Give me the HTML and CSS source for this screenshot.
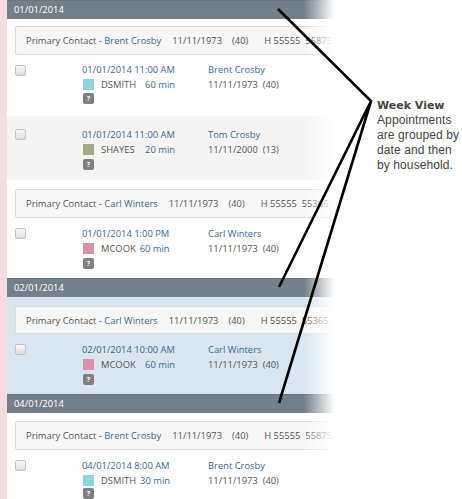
FILE: index.html
```html
<!DOCTYPE html>
<html>
<head>
<meta charset="utf-8"/>
<link rel="stylesheet" href="styles.css">
<title>Week View</title>
</head>

<body>
<div class="Page">
  <div class="Schedule">
    <div class="DateBar">01/01/2014</div>

    <div class="Contact">
      <span class="Label">Primary Contact - <a>Brent Crosby</a></span><span class="Dob">11/11/1973</span><span class="Age">(40)</span><span class="Phone">H 55555&nbsp;&nbsp;55875</span>
    </div>
    <div class="Appt First">
      <span class="Check"></span>
      <div class="When">
        <a>01/01/2014 11:00 AM</a>
        <div class="Who"><span class="Swatch Teal"></span><span class="Staff">DSMITH</span><a class="Len">60 min</a></div>
        <span class="Help">?</span>
      </div>
      <div class="Patient">
        <a>Brent Crosby</a>
        <div class="Birth">11/11/1973&nbsp;&nbsp;(40)</div>
      </div>
    </div>
    <div class="Appt Grey">
      <span class="Check"></span>
      <div class="When">
        <a>01/01/2014 11:00 AM</a>
        <div class="Who"><span class="Swatch Olive"></span><span class="Staff">SHAYES</span><a class="Len">20 min</a></div>
        <span class="Help">?</span>
      </div>
      <div class="Patient">
        <a>Tom Crosby</a>
        <div class="Birth">11/11/2000&nbsp;&nbsp;(13)</div>
      </div>
    </div>

    <div class="Contact">
      <span class="Label">Primary Contact - <a>Carl Winters</a></span><span class="Dob">11/11/1973</span><span class="Age">(40)</span><span class="Phone">H 55555&nbsp;&nbsp;55365</span>
    </div>
    <div class="Appt">
      <span class="Check"></span>
      <div class="When Short">
        <a>01/01/2014 1:00 PM</a>
        <div class="Who"><span class="Swatch Pink"></span><span class="Staff">MCOOK</span><a class="Len">60 min</a></div>
        <span class="Help">?</span>
      </div>
      <div class="Patient">
        <a>Carl Winters</a>
        <div class="Birth">11/11/1973&nbsp;&nbsp;(40)</div>
      </div>
    </div>

    <div class="DateBar">02/01/2014</div>

    <div class="Blue">
      <div class="Contact Thin">
        <span class="Label">Primary Contact - <a>Carl Winters</a></span><span class="Dob">11/11/1973</span><span class="Age">(40)</span><span class="Phone">H 55555&nbsp;&nbsp;55365</span>
      </div>
      <div class="Appt">
        <span class="Check"></span>
        <div class="When">
          <a>02/01/2014 10:00 AM</a>
          <div class="Who"><span class="Swatch Pink"></span><span class="Staff">MCOOK</span><a class="Len">60 min</a></div>
          <span class="Help">?</span>
        </div>
        <div class="Patient">
          <a>Carl Winters</a>
          <div class="Birth">11/11/1973&nbsp;&nbsp;(40)</div>
        </div>
      </div>
    </div>

    <div class="DateBar">04/01/2014</div>

    <div class="Contact Tail">
      <span class="Label">Primary Contact - <a>Brent Crosby</a></span><span class="Dob">11/11/1973</span><span class="Age">(40)</span><span class="Phone">H 55555&nbsp;&nbsp;55875</span>
    </div>
    <div class="Appt">
      <span class="Check"></span>
      <div class="When Shorter">
        <a>04/01/2014 8:00 AM</a>
        <div class="Who"><span class="Swatch Teal"></span><span class="Staff">DSMITH</span><a class="Len">30 min</a></div>
        <span class="Help">?</span>
      </div>
      <div class="Patient">
        <a>Brent Crosby</a>
        <div class="Birth">11/11/1973&nbsp;&nbsp;(40)</div>
      </div>
    </div>

    <div class="Fade"></div>
  </div>

  <div class="Note">
    <b>Week View</b><br>
    Appointments are grouped by date and then by household.
  </div>

  <svg class="Pointers" width="462" height="499">
    <path d="M278 9 L371 101 L279 287 M371 101 L279 403" fill="none" stroke="#000" stroke-width="2.6"/>
  </svg>
</div>
</body>
</html>
```

FILE: styles.css
```css
body {
  margin: 0;
  background-color: #ffffff;
}

a {
  color: #3d6a8a;
}

.Page {
  position: relative;
  display: flex;
  width: 462px;
  height: 499px;
  overflow: hidden;
}

.Schedule {
  position: relative;
  box-sizing: border-box;
  width: 334px;
  height: 499px;
  flex: none;
  overflow: hidden;
  border-left: 7px solid #f3dde0;
  font-family: "Open Sans", "Noto Sans", sans-serif;
  font-size: 9.4px;
  color: #555555;
  white-space: nowrap;
}

.DateBar {
  box-sizing: border-box;
  height: 19px;
  padding-left: 7px;
  background-color: #737f89;
  border-top: 1px solid #68747e;
  color: #ffffff;
  line-height: 18px;
}

.Contact {
  display: flex;
  align-items: center;
  box-sizing: border-box;
  width: 340px;
  height: 29px;
  margin: 7px 0 0 8px;
  padding-left: 10px;
  background-color: #f7f7f7;
  border: 1px solid #dcdcdc;
  border-radius: 2px;
}

.Contact.Thin {
  height: 28px;
}

.Contact.Tail {
  margin-top: 8px;
}

.Dob {
  margin-left: 11px;
}

.Age {
  margin-left: 10px;
}

.Phone {
  margin-left: 16px;
}

.Appt {
  display: flex;
  height: 60px;
  padding-top: 3px;
  box-sizing: border-box;
}

.Appt.First {
  height: 61px;
  padding-top: 2px;
}

.Appt.Grey {
  height: 64px;
  margin-bottom: 9px;
  padding-top: 6px;
  background-color: #f4f4f4;
}

.Blue {
  box-sizing: border-box;
  height: 97px;
  padding-top: 2px;
  background-color: #d9e6ef;
}

.Check {
  box-sizing: border-box;
  width: 11px;
  height: 11px;
  flex: none;
  margin: 7px 0 0 8px;
  background: linear-gradient(#f8f8f8, #dedede);
  border: 1px solid #c4c4c4;
  border-radius: 2px;
}

.First .Check {
  margin-top: 8px;
}

.When {
  width: 94px;
  flex: none;
  margin-left: 56px;
  padding-top: 5px;
  line-height: 15px;
}

.Who {
  display: flex;
  align-items: center;
  height: 15px;
}

.Swatch {
  width: 11px;
  height: 11px;
  flex: none;
  margin-left: 1px;
}

.Teal {
  background-color: #8dd6d6;
}

.Olive {
  background-color: #a8a68a;
}

.Pink {
  background-color: #dc8fa8;
}

.Staff {
  margin-left: 7px;
}

.Len {
  margin-left: auto;
  padding-right: 1px;
}

.Short .Len,
.Shorter .Len {
  margin-left: 4px;
}

.Help {
  display: block;
  width: 11px;
  height: 11px;
  margin: 2px 0 0 1px;
  background-color: #808080;
  border-radius: 2px;
  color: #ffffff;
  font-size: 7px;
  font-weight: bold;
  line-height: 11px;
  text-align: center;
}

.First .Help {
  margin-top: 1px;
}

.Shorter .Help {
  margin-top: 0;
}

.Patient {
  margin-left: 32px;
  padding-top: 5px;
  line-height: 15px;
}

.Birth {
  line-height: 15px;
}

.Fade {
  position: absolute;
  top: 0;
  right: 0;
  width: 30px;
  height: 499px;
  background: linear-gradient(to right, rgba(255, 255, 255, 0), #ffffff);
}

.Note {
  width: 85px;
  margin-left: 43px;
  padding-top: 98px;
  font-family: "Liberation Sans", Arial, sans-serif;
  font-size: 12px;
  letter-spacing: 0.1px;
  line-height: 15px;
  color: #444444;
}

.Note b {
  font-family: "DejaVu Sans", Verdana, sans-serif;
  font-size: 11px;
  letter-spacing: 0;
}

.Pointers {
  position: absolute;
  top: 0;
  left: 0;
}
```
